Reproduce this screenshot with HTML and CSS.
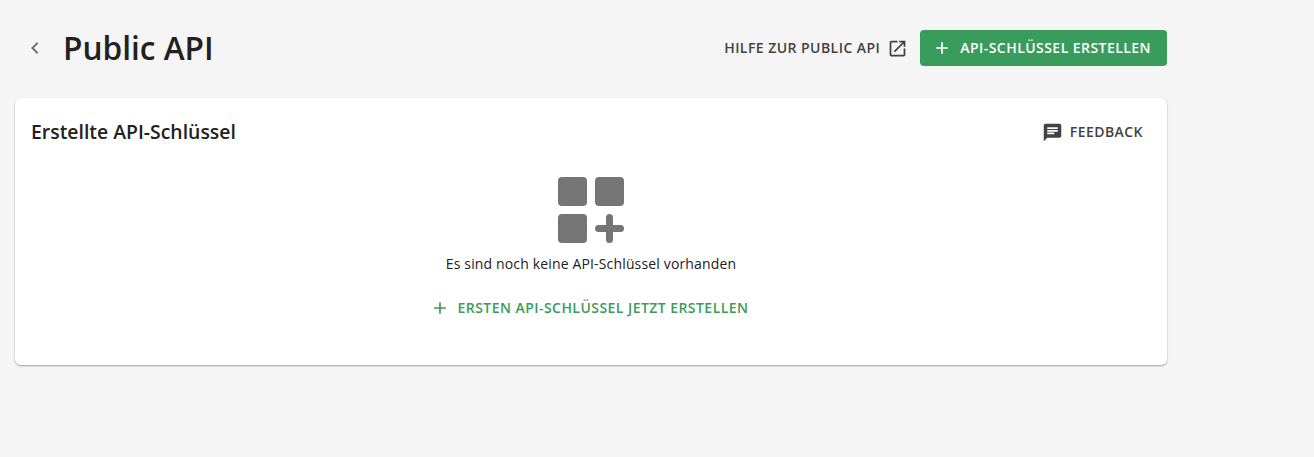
FILE: index.html
```html
<!DOCTYPE html>
<html lang="de">
<head>
  <meta charset="UTF-8">
  <title>Public API</title>
  <link rel="stylesheet" href="styles.css">
</head>
<body>
  <div class="page">
    <!-- Page header -->
    <header class="page-header">
      <button class="back-btn" aria-label="Zurück">
        <svg viewBox="0 0 24 24" width="24" height="24"><path d="M15.41 7.41 14 6l-6 6 6 6 1.41-1.41L10.83 12z"/></svg>
      </button>
      <h1>Public API</h1>
      <div class="header-actions">
        <a class="text-btn help-link">
          <span>Hilfe zur Public API</span>
          <svg viewBox="0 0 24 24" width="21" height="21"><path d="M19 19H5V5h7V3H5a2 2 0 0 0-2 2v14a2 2 0 0 0 2 2h14c1.1 0 2-.9 2-2v-7h-2v7zM14 3v2h3.59l-9.83 9.83 1.41 1.41L19 6.41V10h2V3h-7z"/></svg>
        </a>
        <button class="primary-btn">
          <svg viewBox="0 0 24 24" width="20" height="20"><path d="M19 13h-6v6h-2v-6H5v-2h6V5h2v6h6v2z"/></svg>
          <span>API-Schlüssel erstellen</span>
        </button>
      </div>
    </header>

    <!-- Key list card -->
    <section class="card">
      <div class="card-head">
        <h2>Erstellte API-Schlüssel</h2>
        <a class="text-btn feedback-btn">
          <svg viewBox="0 0 24 24" width="21" height="21"><path d="M20 2H4c-1.1 0-1.99.9-1.99 2L2 22l4-4h14c1.1 0 2-.9 2-2V4c0-1.1-.9-2-2-2zM6 9h12v2H6V9zm8 5H6v-2h8v2zm4-6H6V6h12v2z"/></svg>
          <span>Feedback</span>
        </a>
      </div>
      <div class="empty-state">
        <svg class="empty-icon" viewBox="0 0 66 66" width="66" height="66">
          <rect x="0" y="0" width="29" height="29" rx="4"/>
          <rect x="37" y="0" width="29" height="29" rx="4"/>
          <rect x="0" y="37" width="29" height="29" rx="4"/>
          <rect x="37" y="48" width="29" height="7" rx="3.5"/>
          <rect x="48" y="37" width="7" height="29" rx="3.5"/>
        </svg>
        <p>Es sind noch keine API-Schlüssel vorhanden</p>
        <a class="text-btn create-first">
          <svg viewBox="0 0 24 24" width="20" height="20"><path d="M19 13h-6v6h-2v-6H5v-2h6V5h2v6h6v2z"/></svg>
          <span>Ersten API-Schlüssel jetzt erstellen</span>
        </a>
      </div>
    </section>
  </div>
</body>
</html>
```

FILE: styles.css
```css
* {
  margin: 0;
  padding: 0;
  box-sizing: border-box;
  font-family: 'Open Sans', sans-serif;
}

body {
  background: #f5f5f5;
  color: #212121;
  min-height: 100vh;
}

.page {
  width: 1167px;
  padding: 30px 0 0 15px;
}

/* Header */
.page-header {
  display: flex;
  align-items: center;
  height: 36px;
  margin-bottom: 32px;
}

.back-btn {
  display: flex;
  width: 24px;
  height: 24px;
  margin-left: 8px;
  border: none;
  background: none;
}

.back-btn svg {
  fill: #757575;
}

h1 {
  margin-left: 16px;
  font-size: 31.6px;
  font-weight: 600;
  line-height: 36px;
}

.header-actions {
  display: flex;
  align-items: center;
  margin-left: auto;
}

.text-btn {
  display: flex;
  align-items: center;
  font-size: 14px;
  font-weight: 600;
  line-height: 18px;
  letter-spacing: 0.45px;
  text-transform: uppercase;
  color: #424242;
}

.help-link {
  gap: 7px;
  margin-right: 12px;
}

.help-link svg {
  fill: #424242;
}

.primary-btn {
  display: flex;
  align-items: center;
  gap: 8px;
  height: 36px;
  padding: 0 16px 0 12px;
  border: none;
  border-radius: 4px;
  background: #3a9c5c;
  color: #fff;
  font-size: 14px;
  font-weight: 600;
  line-height: 18px;
  letter-spacing: 0.45px;
  text-transform: uppercase;
}

.primary-btn svg {
  fill: #fff;
}

/* Card */
.card {
  height: 267px;
  padding: 20px 24px 0 16px;
  background: #fff;
  border-radius: 6px;
  box-shadow: 0 1px 2px rgba(0, 0, 0, 0.35);
}

.card-head {
  display: flex;
  align-items: center;
  justify-content: space-between;
  height: 28px;
}

h2 {
  font-size: 19.4px;
  font-weight: 600;
  line-height: 26px;
}

.feedback-btn {
  gap: 7px;
}

.feedback-btn svg {
  fill: #424242;
}

.empty-state {
  display: flex;
  flex-direction: column;
  align-items: center;
  padding: 31px 0 0 8px;
}

.empty-icon {
  fill: #757575;
}

.empty-state p {
  margin-top: 12px;
  font-size: 14px;
  line-height: 18px;
  letter-spacing: 0.15px;
}

.create-first {
  gap: 8px;
  margin-top: 25px;
  margin-right: 4px;
  color: #3a9c5c;
}

.create-first svg {
  fill: #3a9c5c;
}
```
